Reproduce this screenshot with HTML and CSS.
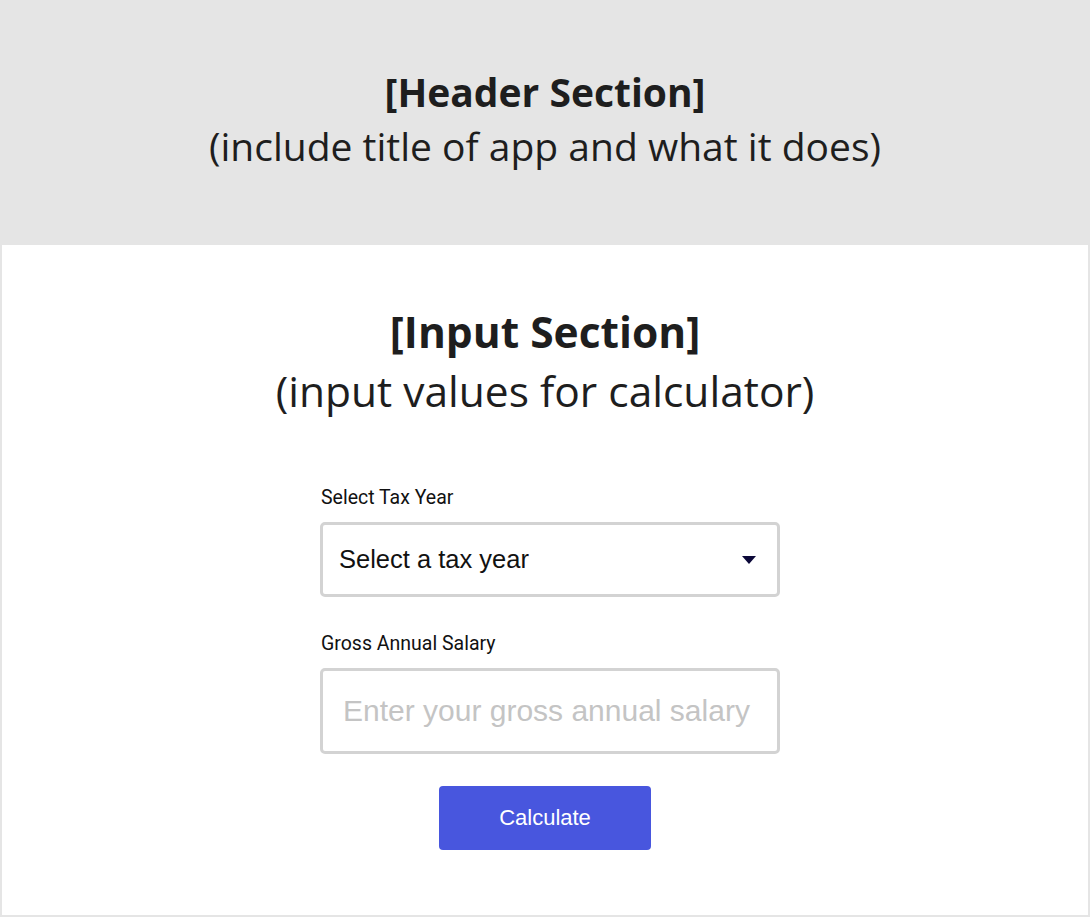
FILE: index.html
```html
<!DOCTYPE html>
<html>
<head>
	<meta charset="utf-8">
	<title>Tax Calculator</title>
	<link rel="stylesheet" href="styles.css">
</head>
<body>

<!-- header -->
<header class="head">
	<h1>[Header Section]</h1>
	<p>(include title of app and what it does)</p>
</header>

<!-- input section -->
<section class="inputs">
	<h2>[Input Section]</h2>
	<p class="sub">(input values for calculator)</p>

	<form class="calc" action="" onsubmit="return false;">
		<label for="year">Select Tax Year</label>
		<div class="select" id="year">
			<span>Select a tax year</span>
			<i class="arrow"></i>
		</div>

		<label for="salary">Gross Annual Salary</label>
		<input type="text" id="salary" placeholder="Enter your gross annual salary">

		<button type="button" class="btn">Calculate</button>
	</form>
</section>

</body>
</html>
```

FILE: styles.css
```css
* { margin:0; padding:0; box-sizing:border-box; }
html, body { height:100%; }
body { background:#fff; font-family:"Open Sans", sans-serif; color:#1e1e1e; display:flex; flex-direction:column; }

.head { height:245px; background:#e5e5e5; display:flex; flex-direction:column; align-items:center; justify-content:center; text-align:center; padding-bottom:8px; }
.head h1 { font-size:39px; font-weight:700; line-height:54px; }
.head p { font-size:39px; font-weight:400; line-height:54px; }

.inputs { flex:1; border:2px solid #e5e5e5; border-top:none; display:flex; flex-direction:column; align-items:center; padding-top:58px; }
.inputs h2 { font-size:42.5px; font-weight:700; line-height:58px; }
.inputs .sub { font-size:42.5px; line-height:60px; }

.calc { width:450px; margin-top:66px; display:flex; flex-direction:column; font-family:"Liberation Sans", Arial, sans-serif; }
.calc label { font:19.5px/22px Roboto, "Liberation Sans", sans-serif; color:#111; margin-bottom:13px; padding-left:1px; }

.select { width:460px; height:75px; border:3px solid #d3d3d3; border-radius:5px; display:flex; align-items:center; justify-content:space-between; padding:0 21px 0 16px; font-size:25.5px; color:#111; margin-bottom:36px; }
.arrow { width:0; height:0; border-left:7px solid transparent; border-right:7px solid transparent; border-top:8px solid #0b0838; }

.calc input { width:460px; height:86px; border:3px solid #d3d3d3; border-radius:5px; padding:0 20px; font:30px "Liberation Sans", Arial, sans-serif; color:#111; outline:none; }
.calc input::placeholder { color:#c4c4c4; }

.btn { align-self:center; width:212px; height:64px; margin-top:32px; background:#4856de; border:none; border-radius:4px; color:#fff; font:22px "Liberation Sans", Arial, sans-serif; cursor:pointer; }
```
